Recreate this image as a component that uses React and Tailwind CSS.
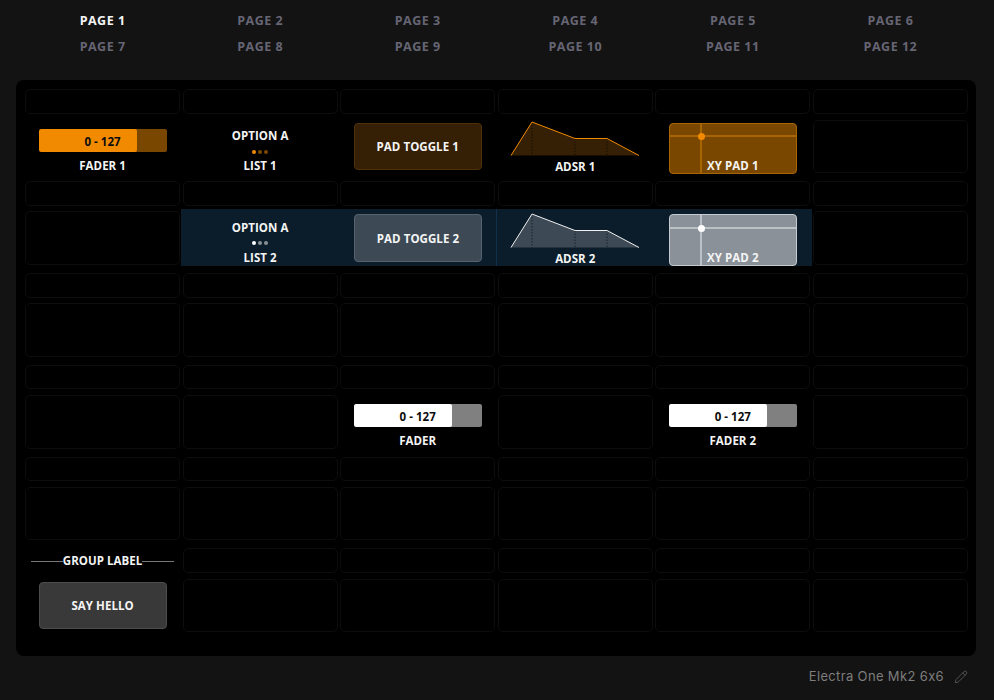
import React from "react";
import { Pencil } from "lucide-react";

const tabs = ["PAGE 1", "PAGE 2", "PAGE 3", "PAGE 4", "PAGE 5", "PAGE 6", "PAGE 7", "PAGE 8", "PAGE 9", "PAGE 10", "PAGE 11", "PAGE 12"];

const Label = ({ children, className = "" }) => (
  <div className={`h-[14px] text-center text-[11.5px] leading-[14px] font-bold tracking-[0.05px] whitespace-nowrap text-[#f4f4f4] ${className}`}>{children}</div>
);

const ThinCell = () => <div className="h-[24.7px] rounded-[5px] border border-[#0d0d0d]" />;

const Cell = () => <div className="h-[53.7px] min-w-0 rounded-[5px] border border-[#0d0d0d]" />;

const Fader = ({ label, orange }) => (
  <div className="flex flex-col items-center pt-[9.5px]">
    <div className={`relative h-[23px] w-[128px] shrink-0 overflow-hidden rounded-[2px] ${orange ? "bg-[#7a4700]" : "bg-[#808080]"}`}>
      <div className={`h-full w-[98px] rounded-[2px] ${orange ? "bg-[#f28a00]" : "bg-white"}`} />
      <div className="absolute inset-0 pt-px text-center text-[11.5px] leading-[23px] font-bold tracking-[0.05px] text-[#0c0c0c]">0 - 127</div>
    </div>
    <Label className="mt-[7px]">{label}</Label>
  </div>
);

const List = ({ label, orange }) => (
  <div className="flex flex-col items-center pt-[9.5px]">
    <Label>OPTION A</Label>
    <div className="mt-[6.5px] flex h-[4px] gap-[2px]">
      <span className={`size-[4px] rounded-full ${orange ? "bg-[#f28a00]" : "bg-white"}`} />
      <span className={`size-[4px] rounded-full ${orange ? "bg-[#7a4700]" : "bg-[#8a9198]"}`} />
      <span className={`size-[4px] rounded-full ${orange ? "bg-[#7a4700]" : "bg-[#8a9198]"}`} />
    </div>
    <Label className="mt-[5.5px]">{label}</Label>
  </div>
);

const Pad = ({ label, className }) => (
  <div className="flex justify-center pt-[3px]">
    <div className={`flex h-[47.5px] w-[128px] items-center justify-center rounded-[4px] border text-[11.5px] font-bold tracking-[0.05px] text-[#f4f4f4] ${className}`}>
      {label}
    </div>
  </div>
);

const Adsr = ({ label, stroke, fill }) => (
  <div className="flex flex-col items-center pt-[1.5px]">
    <svg width="130" height="35" viewBox="0 0 130 35" className="shrink-0">
      <path d="M1 34.5 L22 1 L65 17.5 L97 17.5 L129 34.5 Z" fill={fill} />
      <path d="M22 1V34.5 M65 17.5V34.5 M97 17.5V34.5" stroke="#000" strokeOpacity="0.55" strokeDasharray="1.5 1.5" />
      <path d="M1 34.5 L22 1 L65 17.5 L97 17.5 L129 34.5" fill="none" stroke={stroke} />
    </svg>
    <Label className="mt-[4px]">{label}</Label>
  </div>
);

const XyPad = ({ label, className, line, dot }) => (
  <div className="flex justify-center pt-[3px]">
    <div className={`relative h-[51.5px] w-[128px] overflow-hidden rounded-[4px] border ${className}`}>
      <div className={`absolute top-0 bottom-0 left-[30.5px] w-[2px] ${line}`} />
      <div className={`absolute top-[11.5px] right-0 left-0 h-[2px] ${line}`} />
      <div className={`absolute top-[9.5px] left-[28.5px] size-[7px] rounded-full ${dot}`} />
      <Label className="absolute right-0 bottom-0 left-0">{label}</Label>
    </div>
  </div>
);

const App = () => {
  return (
    <div className="h-[700px] w-[994px] overflow-hidden bg-[#131313] font-['Open_Sans','Noto_Sans',sans-serif]">
      <div className="grid grid-cols-6 gap-x-[2.4px] gap-y-[2px] pt-[9px] pr-[26px] pl-[25px]">
        {tabs.map((t, i) => (
          <div key={t} className={`h-6 text-center text-[12.5px] leading-6 font-bold tracking-[0.5px] ${i === 0 ? "text-[#f4f4f4]" : "text-[#666573]"}`}>
            {t}
          </div>
        ))}
      </div>

      <div className="mx-4 mt-[21px] h-[576px] w-[960px] rounded-[8px] bg-black pt-[9.45px] pr-2 pl-[9px]">
        <div className="grid grid-cols-6 grid-rows-[repeat(6,30.2px_61.6px)] gap-x-[2.4px]">
          {/* row 1 */}
          {[0, 1, 2, 3, 4, 5].map((i) => <ThinCell key={i} />)}
          <Fader label="FADER 1" orange />
          <List label="LIST 1" orange />
          <Pad label="PAD TOGGLE 1" className="border-[#50300a] bg-[#352005]" />
          <Adsr label="ADSR 1" stroke="#f28a00" fill="#352005" />
          <XyPad label="XY PAD 1" className="border-[#a86504] bg-[#7a4700]" line="bg-[#a86504]" dot="bg-[#f28a00]" />
          <Cell />

          {/* row 2 */}
          {[0, 1, 2, 3, 4, 5].map((i) => <ThinCell key={i} />)}
          <Cell />
          <div className="col-span-4 -mx-[2px] -mt-[2px] grid h-[56.5px] grid-cols-4 gap-x-[2.4px] bg-[#0b1d2b] px-[2px] pt-[2px]">
            <List label="LIST 2" />
            <div className="-mt-[2px] -mr-[1.5px] border-r border-[#12304a] pt-[2px]">
              <Pad label="PAD TOGGLE 2" className="border-[#56636e] bg-[#3d4a56]" />
            </div>
            <Adsr label="ADSR 2" stroke="#f0f0f0" fill="#3d4a56" />
            <XyPad label="XY PAD 2" className="border-[#c5cace] bg-[#8a9198]" line="bg-[#bcc1c5]" dot="bg-white" />
          </div>
          <Cell />

          {/* row 3 */}
          {[0, 1, 2, 3, 4, 5].map((i) => <ThinCell key={i} />)}
          {[0, 1, 2, 3, 4, 5].map((i) => <Cell key={i} />)}

          {/* row 4 */}
          {[0, 1, 2, 3, 4, 5].map((i) => <ThinCell key={i} />)}
          <Cell />
          <Cell />
          <Fader label="FADER" />
          <Cell />
          <Fader label="FADER 2" />
          <Cell />

          {/* row 5 */}
          {[0, 1, 2, 3, 4, 5].map((i) => <ThinCell key={i} />)}
          {[0, 1, 2, 3, 4, 5].map((i) => <Cell key={i} />)}

          {/* row 6 */}
          <div className="flex h-[24.7px] items-center px-[6px] pt-px">
            <div className="h-px flex-1 bg-[#777]" />
            <Label>GROUP LABEL</Label>
            <div className="h-px flex-1 bg-[#777]" />
          </div>
          {[0, 1, 2, 3, 4].map((i) => <ThinCell key={i} />)}
          <Pad label="SAY HELLO" className="border-[#4c4c4c] bg-[#393939]" />
          {[0, 1, 2, 3, 4].map((i) => <Cell key={i} />)}
        </div>
      </div>

      <div className="flex h-[41px] items-center justify-end gap-[10px] pr-[26px] font-['Inter',sans-serif] text-[13px] tracking-[0.35px] text-[#7d7d7d]">
        <span>Electra One Mk2 6x6</span>
        <Pencil size={14} strokeWidth={1} />
      </div>
    </div>
  );
};

export default App;
